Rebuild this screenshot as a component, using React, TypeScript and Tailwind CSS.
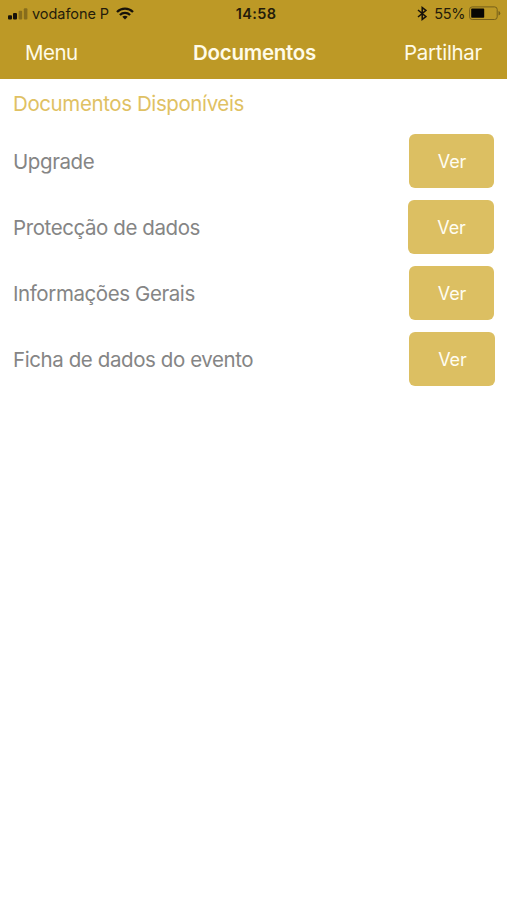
const documents = [
  { title: "Upgrade", shift: "mr-[12.7px]" },
  { title: "Protecção de dados", shift: "mr-[13.2px]" },
  { title: "Informações Gerais", shift: "mr-[12.7px]" },
  { title: "Ficha de dados do evento", shift: "mr-[12.3px]" },
];

function Signal() {
  return (
    <svg width="20" height="12" viewBox="0 0 20 12" fill="#17120a">
      <rect x="0" y="7.2" width="4" height="4.3" rx="1" />
      <rect x="5" y="5" width="4" height="6.5" rx="1" />
      <rect x="10.6" y="2.7" width="3.6" height="8.8" rx="1" opacity="0.32" />
      <rect x="15.8" y="0.2" width="3.6" height="11.3" rx="1" opacity="0.32" />
    </svg>
  );
}

function Wifi() {
  return (
    <svg width="18" height="13" viewBox="0 0 18 13" fill="none" stroke="#17120a" strokeWidth="2.3">
      <path d="M1 5 C5.5 0.5 12.5 0.5 17 5" />
      <path d="M3.9 8 C6.8 5.2 11.2 5.2 14.1 8" />
      <path d="M6.3 9.7 Q9 7.6 11.7 9.7 L9 12.6 Z" fill="#17120a" stroke="none" />
    </svg>
  );
}

function Bluetooth() {
  return (
    <svg width="10" height="15" viewBox="0 0 10 15" fill="none" stroke="#17120a" strokeWidth="1.5">
      <path d="M1 4 L9 10.6 L5.2 13.4 V1.6 L9 4.4 L1 11" />
    </svg>
  );
}

function Battery() {
  return (
    <svg width="32" height="15" viewBox="0 0 32 15">
      <rect x="0.6" y="0.9" width="27.6" height="12.6" rx="2.6" fill="none" stroke="#76601a" />
      <rect x="2.2" y="2.6" width="13" height="9.2" rx="0.8" fill="#070604" />
      <path d="M29.5 5 Q31.3 5.4 31.3 7.2 T29.5 9.6 Z" fill="#76601a" />
    </svg>
  );
}

export default function App() {
  return (
    <div className="flex h-[900px] w-[507px] flex-col overflow-hidden bg-white font-['Inter','Liberation_Sans',sans-serif]">
      <header className="h-[79px] shrink-0 bg-[#bd9926]">
        <div className="grid h-[27px] grid-cols-[1fr_auto_1fr] items-center pr-[6px] pl-2 text-[14.5px] leading-none text-[#241c0a]">
          <div className="flex items-center">
            <Signal />
            <span className="ml-[4px] pt-[2px] tracking-[-0.05px]">vodafone P</span>
            <span className="ml-[7px]"><Wifi /></span>
          </div>
          <span className="pt-[2px] pl-[3px] font-semibold tracking-[0.35px]">14:58</span>
          <div className="flex items-center justify-end">
            <Bluetooth />
            <span className="mr-[4px] ml-[7px] pt-[2px] tracking-[-0.4px]">55%</span>
            <Battery />
          </div>
        </div>
        <nav className="grid h-[52px] grid-cols-[1fr_auto_1fr] items-center pt-px pr-[25px] pl-[25px] text-[20.5px] text-[#fffbe8]">
          <button className="text-left tracking-[-0.5px]">Menu</button>
          <h1 className="pl-[2px] font-semibold tracking-[-0.25px]">Documentos</h1>
          <button className="text-right tracking-[-0.3px]">Partilhar</button>
        </nav>
      </header>
      <main className="pl-[13px]">
        <h2 className="flex h-[49px] items-center pt-[2px] text-[20.5px] tracking-[-0.4px] text-[#dfc163]">Documentos Disponíveis</h2>
        <ul>
          {documents.map((doc) => (
            <li key={doc.title} className="flex h-[66px] items-center justify-between">
              <span className="pt-[2px] text-[20.5px] tracking-[-0.41px] text-[#858585]">{doc.title}</span>
              <button className={`h-[54px] w-[85.5px] rounded-[6px] bg-[#dcbf62] pl-px text-[18px] tracking-[-0.1px] text-[#fffdf2] ${doc.shift}`}>
                Ver
              </button>
            </li>
          ))}
        </ul>
      </main>
    </div>
  );
}
